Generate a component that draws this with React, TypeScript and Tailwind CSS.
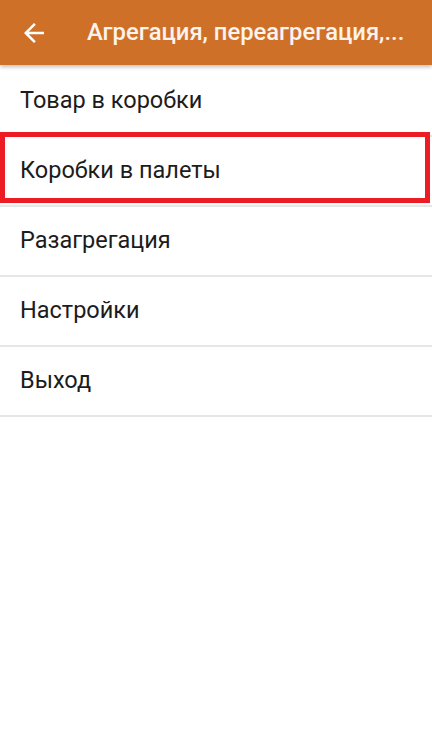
const items = ["Товар в коробки", "Коробки в палеты", "Разагрегация", "Настройки", "Выход"];

function BackArrow() {
  return (
    <svg viewBox="0 0 24 24" className="size-[30px] fill-white" aria-hidden="true">
      <path d="M20 11H7.83l5.59-5.59L12 4l-8 8 8 8 1.41-1.41L7.83 13H20v-2z" />
    </svg>
  );
}

export default function App() {
  return (
    <div className="min-h-screen bg-white font-['Roboto',sans-serif]">
      <header className="relative z-10 flex h-[65px] items-center bg-[#cf7029] shadow-[0_2px_4px_rgba(0,0,0,0.25)]">
        <button type="button" className="ml-[19px] flex shrink-0 items-center">
          <BackArrow />
        </button>
        <h1 className="ml-[38px] whitespace-nowrap text-[23.8px] font-medium text-[#fbf3ec]">
          Агрегация, переагрегация,...
        </h1>
      </header>

      <ul className="pt-[2px]">
        {items.map((item, index) => (
          <li
            key={item}
            className="relative flex h-[70px] items-center border-b-2 border-[#e6e6e6] px-5 text-[23.5px] text-[#1c1c1c]"
          >
            {item}
            {index === 1 && (
              <span className="pointer-events-none absolute -top-[5px] bottom-[2px] left-0 right-[2px] border-[5px] border-[#ed1c24]" />
            )}
          </li>
        ))}
      </ul>
    </div>
  );
}
